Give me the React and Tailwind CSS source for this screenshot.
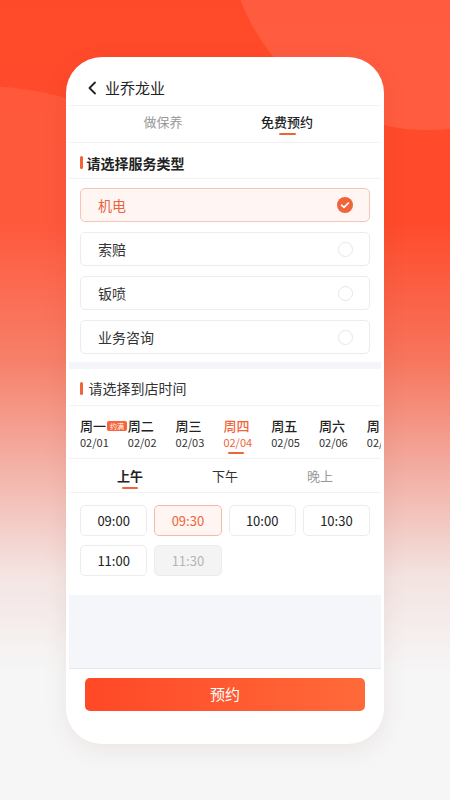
import React from 'react';

const font = { fontFamily: '"Noto Sans CJK SC", "Noto Sans", sans-serif' };

const services = [
  { name: '机电', selected: true },
  { name: '索赔' },
  { name: '钣喷' },
  { name: '业务咨询' },
];

const days = [
  { name: '周一', date: '02/01', full: true },
  { name: '周二', date: '02/02' },
  { name: '周三', date: '02/03' },
  { name: '周四', date: '02/04', active: true },
  { name: '周五', date: '02/05' },
  { name: '周六', date: '02/06' },
  { name: '周日', date: '02/07' },
];

const slots = [
  { t: '09:00' },
  { t: '09:30', selected: true },
  { t: '10:00' },
  { t: '10:30' },
  { t: '11:00' },
  { t: '11:30', disabled: true },
];

const CheckCircle = () => (
  <svg width="16" height="16" viewBox="0 0 16 16">
    <circle cx="8" cy="8" r="8" fill="#f0643a" />
    <path d="M4.6 8.2 L7 10.4 L11.4 6" fill="none" stroke="#fff" strokeWidth="1.7" strokeLinecap="round" strokeLinejoin="round" />
  </svg>
);

const SectionTitle = ({ children, bold }) => (
  <div className="flex items-center h-full pl-[11px]">
    <span className="w-[2.5px] h-[13px] bg-[#f0643a] rounded-sm" />
    <span className={`text-[14px] leading-[16px] ${bold ? 'ml-[4px] font-bold text-[#222]' : 'ml-[6px] text-[#333]'}`}>
      {children}
    </span>
  </div>
);

export default function App() {
  return (
    <div
      className="relative w-full min-h-[800px] overflow-hidden bg-[linear-gradient(180deg,#ff4a2a_0%,#ff4b2c_28%,#f7755d_45%,#f2b2a8_60%,#f3e3e1_72%,#f6f6f6_84%,#f6f6f6_100%)]"
      style={font}
    >
      {/* decorative circles */}
      <div className="absolute w-[400px] h-[400px] rounded-full bg-white/10 left-[228px] top-[-270px]" />
      <div className="absolute w-[630px] h-[630px] rounded-full bg-white/[0.08] left-[-335px] top-[86px]" />

      <div className="relative flex justify-center pt-[57px]">
        <div className="w-[318px] h-[687px] bg-white rounded-[36px] px-[3px] flex flex-col overflow-hidden shadow-[0_6px_24px_rgba(120,40,20,0.08)]">
          {/* header */}
          <div className="h-[49px] shrink-0 pt-[14px] flex items-center pl-[18px] border-b border-[#f3f3f3]">
            <svg width="10" height="14" viewBox="0 0 10 14">
              <path d="M8 1.5 L2.5 7 L8 12.5" fill="none" stroke="#222" strokeWidth="1.8" strokeLinecap="round" strokeLinejoin="round" />
            </svg>
            <span className="ml-[8px] text-[15px] leading-[18px] text-[#222]">业乔龙业</span>
          </div>

          {/* tabs */}
          <div className="h-[37px] shrink-0 flex justify-center border-b border-[#f3f3f3]">
            <div className="w-[124px] flex flex-col items-center pt-[8px]">
              <span className="text-[13px] leading-[16px] text-[#999]">做保养</span>
            </div>
            <div className="w-[124px] flex flex-col items-center pt-[8px]">
              <span className="text-[13px] leading-[16px] text-[#222] font-medium">免费预约</span>
              <span className="mt-[3px] w-[17px] h-[2px] bg-[#f0643a] rounded-full" />
            </div>
          </div>

          {/* service type */}
          <div className="h-[36px] shrink-0 pt-[4px] border-b border-[#f3f3f3]">
            <SectionTitle bold>请选择服务类型</SectionTitle>
          </div>
          <div className="shrink-0 px-[11px] pt-[9px] pb-[8px] flex flex-col gap-[10px]">
            {services.map((s) => (
              <div
                key={s.name}
                className={`h-[34px] rounded-[5px] border flex items-center justify-between pl-[17px] pr-[16px] ${
                  s.selected ? 'bg-[#fff5f2] border-[#f6c5b6]' : 'bg-white border-[#ececec]'
                }`}
              >
                <span className={`text-[14px] ${s.selected ? 'text-[#e8643f]' : 'text-[#333]'}`}>{s.name}</span>
                {s.selected ? (
                  <CheckCircle />
                ) : (
                  <span className="w-[15px] h-[15px] rounded-full border border-[#e6e6e6]" />
                )}
              </div>
            ))}
          </div>

          <div className="h-[7px] shrink-0 bg-[#f4f6f9]" />

          {/* arrival time */}
          <div className="h-[37px] shrink-0 pt-[2px] border-b border-[#f3f3f3]">
            <SectionTitle>请选择到店时间</SectionTitle>
          </div>

          <div className="h-[53px] shrink-0 flex overflow-hidden pl-[11px] border-b border-[#f3f3f3]">
            {days.map((d) => (
              <div key={d.name} className="relative w-[47.8px] shrink-0 flex flex-col pt-[11px]">
                <span className={`text-[13px] leading-[18px] font-medium ${d.active ? 'text-[#f0643a]' : 'text-[#222]'}`}>
                  {d.name}
                </span>
                <span className={`text-[11px] leading-[14px] ${d.active ? 'text-[#f0643a]' : 'text-[#333]'}`}>{d.date}</span>
                {d.active && <span className="mt-[3px] ml-[5px] w-[16px] h-[2px] bg-[#f0643a] rounded-full" />}
                {d.full && (
                  <span className="absolute left-[27px] top-[15px] w-[20px] h-[10px] rounded-[2px] bg-[#f86338] text-white text-[7px] leading-[10px] text-center">
                    约满
                  </span>
                )}
              </div>
            ))}
          </div>

          <div className="h-[34px] shrink-0 flex justify-center border-b border-[#f3f3f3]">
            <div className="w-[95px] flex flex-col items-center pt-[9px]">
              <span className="text-[13px] leading-[16px] text-[#222] font-bold">上午</span>
              <span className="mt-[3px] w-[16px] h-[2px] bg-[#f0643a] rounded-full" />
            </div>
            <div className="w-[95px] flex flex-col items-center pt-[9px]">
              <span className="text-[13px] leading-[16px] text-[#333]">下午</span>
            </div>
            <div className="w-[95px] flex flex-col items-center pt-[9px]">
              <span className="text-[13px] leading-[16px] text-[#999]">晚上</span>
            </div>
          </div>

          <div className="shrink-0 px-[11px] pt-[12px] pb-[19px] grid grid-cols-4 gap-x-[7px] gap-y-[9px]">
            {slots.map((s) => (
              <div
                key={s.t}
                className={`h-[31px] rounded-[5px] border flex items-center justify-center text-[13px] ${
                  s.selected
                    ? 'bg-[#fff5f2] border-[#f6b9a6] text-[#f0643a]'
                    : s.disabled
                    ? 'bg-[#f4f4f4] border-[#ececec] text-[#b5b5b5]'
                    : 'bg-white border-[#ececec] text-[#222]'
                }`}
              >
                {s.t}
              </div>
            ))}
          </div>

          <div className="h-[74px] shrink-0 bg-[#f4f6fa] border-b border-[#e6e8eb]" />

          <div className="flex-1 px-[16px] pt-[9px]">
            <button className="w-full h-[33px] rounded-[5px] bg-[linear-gradient(90deg,#ff4826,#ff6a3a)] text-white text-[15px]">
              预约
            </button>
          </div>
        </div>
      </div>
    </div>
  );
}
